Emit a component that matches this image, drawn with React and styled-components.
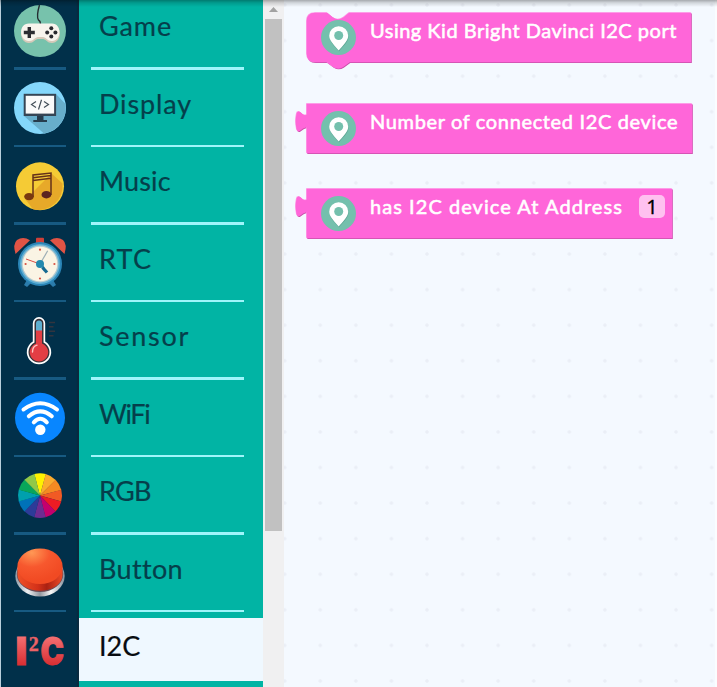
import React from "react";
import styled, { createGlobalStyle } from "styled-components";

const Global = createGlobalStyle`
  * { box-sizing: border-box; }
  body { margin: 0; overflow: hidden; font-family: Lato, "Open Sans", sans-serif; }
`;

const Workspace = styled.div`
  position: relative;
  display: flex;
  width: 717px;
  height: 687px;
  overflow: hidden;
  background: #f4f9ff;
`;

const TopShadow = styled.div`
  position: absolute;
  inset: 0 0 auto 0;
  height: 7px;
  background: linear-gradient(rgba(0, 0, 0, 0.32), rgba(0, 0, 0, 0.14) 40%, transparent);
`;

const IconRail = styled.div`
  flex: 0 0 79px;
  border-left: 1px solid #b9cfdc;
  background: #01304a;
  box-shadow: inset -2px 0 1px #0b2a3f;
`;

const LabelRail = styled.div`
  flex: 0 0 184px;
  background: #01b4a4;
`;

const RailList = styled.div`
  display: flex;
  flex-direction: column;
  margin-top: -7.8px;
`;

const IconCell = styled.div`
  flex: 0 0 77.5px;
  height: 77.5px;
  padding: 12.5px 13px 0;

  svg { display: block; width: 52px; height: 52px; overflow: visible; }
`;

const Rule = styled.div`
  height: 2.5px;
  margin-top: ${(p) => p.$gap}px;
  background: ${(p) => p.$color};
`;

const LabelCell = styled.div`
  flex: 0 0 77.5px;
  height: 77.5px;
  padding: 5.8px 0 0;
`;

const Label = styled.div`
  height: 63px;
  padding-left: 20px;
  line-height: 55px;
  font-size: 27px;
  letter-spacing: ${(p) => p.$track}px;
  color: ${(p) => (p.$active ? "#080c10" : "#053f4b")};
  background: ${(p) => (p.$active ? "#eff8ff" : "transparent")};
  -webkit-text-stroke: 0.2px currentColor;
`;

const LabelRule = styled(Rule)`
  margin: 6.2px 19px 0 12px;
`;

const Scrollbar = styled.div`
  flex: 0 0 21px;
  padding: 0 2px;
  background: #f0f0f1;

  svg { display: block; width: 17px; height: 19px; }
`;

const Thumb = styled.div`
  width: 17px;
  height: 512px;
  background: #c1c1c1;
`;

const Canvas = styled.div`
  flex: 1;
  display: flex;
  flex-direction: column;
  align-items: flex-start;
  padding: 12px 0 0 11px;
  border-right: 2px solid #fbfdff;
  background: radial-gradient(circle, #eaeef6 1.2px, transparent 2.2px) -17.1px -12.8px / 35.58px 35.58px #f4f9ff;
`;

const Block = styled.div`
  position: relative;
  display: flex;
  width: ${(p) => p.$width + 12}px;
  height: 51px;
  margin-bottom: ${(p) => p.$after}px;
  padding-left: 26px;
`;

const Shape = styled.svg`
  position: absolute;
  inset: 0;
  width: 100%;
  height: 100%;
  overflow: visible;
`;

const Pin = styled.svg`
  position: relative;
  flex: 0 0 35px;
  height: 35px;
  margin-top: 8px;
`;

const BlockText = styled.span`
  position: relative;
  margin: 5px 0 0 14px;
  font-size: 20px;
  line-height: 26px;
  letter-spacing: ${(p) => p.$track}px;
  white-space: nowrap;
  color: #fff;
  -webkit-text-stroke: 0.55px #fff;
`;

const Field = styled.span`
  position: absolute;
  right: 8px;
  top: 7px;
  width: 26px;
  height: 23px;
  border-radius: 5px;
  background: #ffc1f0;
  color: #000;
  font: 20px/23px "Noto Sans", sans-serif;
  text-align: center;
  -webkit-text-stroke: 0.3px #000;
`;

function BlockShape({ width, stack }) {
  const r = width + 11;
  const d = stack
    ? `M20 .5H32L37.500 5Q43 9 48.500 5L54 .5H${r}V50H54.500L48 54.800Q43 58 38 54.800L31.500 50H20Q11.500 50 11.500 41.500V9Q11.500 .5 20 .5Z`
    : `M11.500 .5H${r}V50H11.500V24.500C9 23.500 7 26.500 4 28Q1.500 28.500 1.300 25.500Q-.3 18 1.300 11Q1.500 8 4 8.300C7 9.500 8 13 11.500 11.500Z`;
  return (
    <Shape>
      <path d={d} fill="#c94fa9" transform="translate(.8 .9)" />
      <path d={d} fill="#ff97e5" transform="translate(-.4 -.3)" />
      <path d={d} fill="#ff66d9" transform="translate(.2 .3)" />
    </Shape>
  );
}

const PinIcon = () => (
  <Pin viewBox="0 0 35 35">
    <circle cx="17.500" cy="17.500" r="17.500" fill="#74c0ad" />
    <path d="M17.700 31C15 27.500 8.200 22 8.200 16.300a9.500 9.500 0 0 1 19 0C27.200 22 20 27.500 17.700 31Z" fill="#5ca593" transform="translate(.3 .5)" />
    <path d="M17.700 30.500C15.500 27.500 8.200 21.500 8.200 15.800a9.500 9.500 0 0 1 19 0C27.200 21.500 20 27.500 17.700 30.500Z" fill="#fff" />
    <circle cx="17.700" cy="15.500" r="4.500" fill="#74c0ad" />
  </Pin>
);

const BLOCKS = [
  { text: "Using Kid Bright Davinci I2C port", width: 385, track: 0.5, after: 40, stack: true },
  { text: "Number of connected I2C device", width: 386, track: 0.65, after: 34 },
  { text: "has I2C device At Address", width: 366, track: 1.05, after: 0, value: "1" },
];

const GameIcon = () => (
  <svg viewBox="0 0 52 52">
    <circle cx="26" cy="26" r="26" fill="#77c2ac" />
    <path d="M25.500 0C24 5 22.500 12 24.500 15q2 1 2 4" fill="none" stroke="#242c31" strokeWidth="1.400" />
    <path d="M15 20C4 20 5 38 15 38c5 0 6-4 9-4h5c3 0 4 4 9 4 10 0 11-18 0-18Z" fill="#d5c9b9" />
    <path d="M15 18.600C4 18.600 5 36 15 36c5 0 6-4 9-4h5c3 0 4 4 9 4 10 0 10-17.400 0-17.400Z" fill="#f8f4ed" />
    <path d="M15.300 22v11M9.800 27.500h11" stroke="#2c2c31" strokeWidth="3.400" />
    <g fill="#29292e">
      <circle cx="37.300" cy="23.300" r="2" /><circle cx="37.300" cy="31.500" r="2" />
      <circle cx="33.200" cy="27.400" r="2" /><circle cx="41.400" cy="27.400" r="2" />
    </g>
  </svg>
);

const DisplayIcon = () => (
  <svg viewBox="0 0 52 52">
    <circle cx="26" cy="26" r="26" fill="#84d7fb" />
    <path d="M42 12L51.500 22A26 26 0 0 1 30 51.600L10 34Z" fill="#68aecb" />
    <path d="M23 33h6.500v5H33v2H19.300v-2H23Z" fill="#263c4d" />
    <rect x="9.700" y="11.800" width="32.400" height="22.200" fill="#354555" />
    <rect x="11.700" y="13.800" width="28.400" height="17.800" fill="#fafafa" />
    <path d="M22 19.500l-4.500 3 4.500 3M30 19.500l4.500 3-4.500 3M27.500 17.700l-3 9.800" fill="none" stroke="#444f59" strokeWidth="1.200" />
  </svg>
);

const MusicIcon = () => (
  <svg viewBox="0 0 52 52">
    <circle cx="26" cy="26.300" r="24" fill="#f5cb35" />
    <path d="M37.500 13.500L48.500 23.500A24 24 0 0 1 19 49.300L11.500 39.500Z" fill="#e7a929" />
    <path d="M19 37V15l18-2v22M19 20.500l18-2.200M19 17.800l18-2.200" fill="none" stroke="#66321a" strokeWidth="1.500" />
    <ellipse cx="15" cy="36.600" rx="4.800" ry="3.700" fill="#79380f" />
    <ellipse cx="32.400" cy="34.700" rx="4.900" ry="3.700" fill="#5c2420" />
  </svg>
);

const ClockIcon = () => (
  <svg viewBox="0 0 52 52">
    <path d="M14 41l-4 7 3 2 5-5M38 41l4 7-3 2-5-5" fill="#2b7cac" />
    <path d="M1.500 17Q-1.500 7 3 3 9 -1 16 3.200ZM50.500 17Q53.500 7 49 3 43 -1 36 3.200Z" fill="#e15445" />
    <rect x="22" y=".8" width="8" height="6" rx="1" fill="#ce4039" />
    <circle cx="26" cy="27" r="22" fill="#2b86b8" />
    <circle cx="26" cy="27" r="20" fill="#5eaed3" />
    <circle cx="26" cy="27" r="18.500" fill="#b7cbd0" />
    <circle cx="26" cy="27" r="17.300" fill="#faf4e4" />
    <g fill="#d95143">
      <circle cx="26" cy="12.700" r="1.100" /><circle cx="26" cy="41.500" r="1.100" />
      <circle cx="11.600" cy="27" r="1.100" /><circle cx="40.400" cy="27" r="1.100" />
    </g>
    <path d="M26 27l7.700-13.200" stroke="#9daeb5" strokeWidth="1.200" />
    <path d="M26 27l-14-5" stroke="#dc4d45" strokeWidth="1" />
    <path d="M26 27l4 4" stroke="#237fa5" strokeWidth="2" />
    <path d="M28.500 30.500l4.500 5" stroke="#176a91" strokeWidth="3.300" />
    <circle cx="26" cy="27" r="4" fill="#2489ae" />
  </svg>
);

const ThermometerIcon = () => (
  <svg viewBox="0 0 52 52">
    <path d="M18.800 8.300a6.200 6.200 0 0 1 12.400 0v18.300a12.200 12.200 0 1 1-12.400 0Z" fill="#fff" />
    <path d="M20.500 8.300a4.500 4.500 0 0 1 9 0v19.300a10.500 10.500 0 1 1-9 0Z" fill="#383137" />
    <path d="M22 8.500a3 3 0 0 1 6 0V16h-6Z" fill="#5eafd0" />
    <path d="M22 15.500h6v13.100a9.200 9.200 0 1 1-6 0Z" fill="#e33e44" />
    <path d="M18.500 37q0-5.500 4.500-6.800" fill="none" stroke="#ffc4c2" strokeWidth="1.400" strokeLinecap="round" />
    <path d="M35 7.600h6M35 11.700h4.500M35 16.300h6M35 20.700h4.500" stroke="#32343f" strokeWidth="1.500" />
  </svg>
);

const WifiIcon = () => (
  <svg viewBox="0 0 52 52">
    <circle cx="26" cy="25.800" r="25" fill="#0886ff" />
    <g fill="none" stroke="#fff" strokeWidth="4" strokeLinecap="round">
      <path d="M9.500 17.500Q26.300 5 43 17.500" />
      <path d="M14.800 24.300Q26.300 14.500 37.800 24.300" />
      <path d="M19.800 30.300Q26.300 23.300 32.800 30.300" />
    </g>
    <circle cx="26.300" cy="37.800" r="5.200" fill="#fff" />
  </svg>
);

const WHEEL = ["#fff100", "#fbab2e", "#f58a22", "#f15a24", "#ed1c24", "#c4006d", "#6d2c91", "#2d3b98", "#0072b8", "#00a0ad", "#09a65a", "#91c848"];

const WheelIcon = () => (
  <svg viewBox="0 0 52 52">
    {WHEEL.map((color, i) => {
      const at = (deg) => {
        const a = (deg * Math.PI) / 180;
        return `${26 + 22 * Math.sin(a)} ${25.6 - 22.4 * Math.cos(a)}`;
      };
      return <path key={color} fill={color} d={`M26 25.600L${at(i * 30 - 15)}A22 22.400 0 0 1 ${at(i * 30 + 15.5)}Z`} />;
    })}
  </svg>
);

const ButtonIcon = () => (
  <svg viewBox="0 0 52 52">
    <defs>
      <linearGradient id="metal"><stop stopColor="#8e9aa6" /><stop offset=".25" stopColor="#eef0f3" /><stop offset=".5" stopColor="#92979f" /><stop offset=".72" stopColor="#f8f8f8" /><stop offset="1" stopColor="#87929e" /></linearGradient>
      <linearGradient id="side"><stop stopColor="#f05026" /><stop offset=".45" stopColor="#d33119" /><stop offset=".65" stopColor="#aa2112" /><stop offset="1" stopColor="#ee4b27" /></linearGradient>
      <radialGradient id="cap" cx=".32" cy=".12" r=".8"><stop stopColor="#ff9855" /><stop offset=".5" stopColor="#f7582e" /><stop offset="1" stopColor="#f14a23" /></radialGradient>
    </defs>
    <ellipse cx="26" cy="29" rx="24.700" ry="20.500" fill="url(#metal)" />
    <ellipse cx="26" cy="27" rx="23.200" ry="18" fill="#6b4a54" />
    <path d="M3.500 20v8C5 49 47 49 48.500 28v-8Z" fill="url(#side)" />
    <ellipse cx="26" cy="19.300" rx="22.600" ry="17.800" fill="url(#cap)" />
  </svg>
);

const Glyph = styled.text`
  font-family: ${(p) => (p.$serif ? '"Liberation Serif", serif' : 'Inter, "Liberation Sans", sans-serif')};
  font-weight: ${(p) => (p.$serif ? 700 : 900)};
  font-size: ${(p) => p.$size}px;
  fill: ${(p) => p.$fill || "url(#redtext)"};
  stroke: ${(p) => p.$fill || "url(#redtext)"};
  stroke-width: ${(p) => (p.$serif ? 0.4 : 0.9)}px;
`;

const I2CIcon = () => (
  <svg viewBox="0 0 52 52">
    <defs><linearGradient id="redtext" x2="0" y2="1"><stop offset=".2" stopColor="#f46f72" /><stop offset=".8" stopColor="#d93034" /></linearGradient></defs>
    <Glyph x="1.500" y="40" $size={39} textLength="11.800" lengthAdjust="spacingAndGlyphs">I</Glyph>
    <Glyph x="14.700" y="26.300" $size={20} $serif $fill="#ed6266">2</Glyph>
    <Glyph x="26.500" y="39.700" $size={38} textLength="23.500" lengthAdjust="spacingAndGlyphs">C</Glyph>
  </svg>
);

const CATEGORIES = [
  { name: "Game", Icon: GameIcon, track: 0.9 },
  { name: "Display", Icon: DisplayIcon, track: 0.85 },
  { name: "Music", Icon: MusicIcon, track: 0.15 },
  { name: "RTC", Icon: ClockIcon, track: 1.3 },
  { name: "Sensor", Icon: ThermometerIcon, track: 1.7 },
  { name: "WiFi", Icon: WifiIcon, track: -1.4 },
  { name: "RGB", Icon: WheelIcon, track: -0.7 },
  { name: "Button", Icon: ButtonIcon, track: 0.35 },
  { name: "I2C", Icon: I2CIcon, track: 0, active: true },
];

export default function App() {
  return (
    <Workspace>
      <Global />
      <IconRail>
        <RailList>
          {CATEGORIES.map(({ name, Icon }) => (
            <IconCell key={name}><Icon /><Rule $gap={10.5} $color="#175a82" /></IconCell>
          ))}
        </RailList>
      </IconRail>
      <LabelRail>
        <RailList>
          {CATEGORIES.map(({ name, track, active }) => (
            <LabelCell key={name}><Label $track={track} $active={active}>{name}</Label><LabelRule $color="#9ff5fa" /></LabelCell>
          ))}
        </RailList>
      </LabelRail>
      <Scrollbar>
        <svg viewBox="0 0 17 19"><path d="M4 12l4.500-5 4.500 5Z" fill="#a2a2a2" /></svg>
        <Thumb />
      </Scrollbar>
      <Canvas>
        {BLOCKS.map(({ text, width, track, after, stack, value }) => (
          <Block key={text} $width={width} $after={after}>
            <BlockShape width={width} stack={stack} />
            <PinIcon />
            <BlockText $track={track}>{text}</BlockText>
            {value && <Field>{value}</Field>}
          </Block>
        ))}
      </Canvas>
      <TopShadow />
    </Workspace>
  );
}
